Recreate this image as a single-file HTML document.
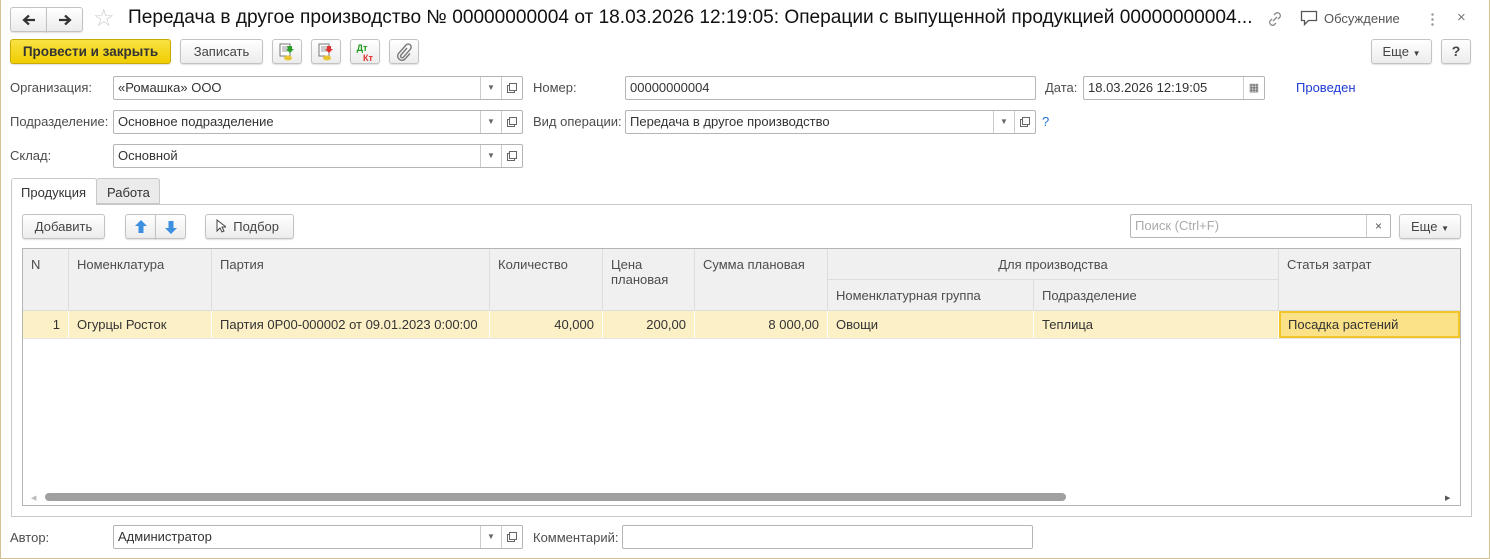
<!DOCTYPE html>
<html><head><meta charset="utf-8"><style>
*{box-sizing:border-box;margin:0;padding:0}
body{width:1490px;height:559px;background:#fff;font-family:"Liberation Sans",Arial,sans-serif;font-size:13px;color:#333;position:relative;overflow:hidden}
.frame{position:absolute;left:0;top:0;width:1490px;height:559px;border:1px solid #d3c28e;border-top:none}
.a{position:absolute}
.btn{position:absolute;height:25px;border:1px solid #c3c3c3;border-radius:3px;background:linear-gradient(#fff,#ececec);box-shadow:0 1px 1px rgba(0,0,0,.12);text-align:center;line-height:23px;color:#444}
.lbl{position:absolute;color:#4d4d4d}
.fld{position:absolute;height:24px;border:1px solid #b5b5b5;border-radius:2px;background:#fff;line-height:22px;padding-left:4px;color:#333}
.dd{position:absolute;top:0;width:21px;height:22px;border-left:1px solid #ccc;text-align:center;font-size:8px;color:#666;line-height:22px}
.op{position:absolute;top:0;right:0;width:21px;height:22px;border-left:1px solid #ccc}
.op:after{content:"";position:absolute;left:7px;top:6px;width:6px;height:6px;border:1px solid #666;box-shadow:-2px 2px 0 -1px #fff,-2px 2px 0 0 #666}
.th{position:absolute;background:#f0f0f0;border-right:1px solid #ddd;border-bottom:1px solid #ddd;padding:8px 8px;color:#4d4d4d;line-height:15px}
.td{position:absolute;top:311px;height:27px;background:#fcf0c6;border-right:1px solid #fff;padding:0 8px;line-height:28px;color:#333}
</style></head><body>
<div class="frame"></div>
<!-- nav -->
<div class="btn" style="left:10px;top:7px;width:37px;height:25px;border-radius:3px 0 0 3px"><svg width="14" height="12" viewBox="0 0 14 12" style="margin-top:6px"><path d="M13 6H3M7 1.5L2 6l5 4.5" fill="none" stroke="#333" stroke-width="2.2"/></svg></div>
<div class="btn" style="left:46px;top:7px;width:37px;height:25px;border-radius:0 3px 3px 0"><svg width="14" height="12" viewBox="0 0 14 12" style="margin-top:6px"><path d="M1 6h10M7 1.5L12 6l-5 4.5" fill="none" stroke="#333" stroke-width="2.2"/></svg></div>
<div class="a" style="left:93px;top:4px;font-size:24px;color:#ccc">&#9734;</div>
<div class="a" style="left:128px;top:7px;font-size:19.1px;color:#111;white-space:nowrap">Передача в другое производство № 00000000004 от 18.03.2026 12:19:05: Операции с выпущенной продукцией 00000000004...</div>
<svg class="a" style="left:1266px;top:10px" width="18" height="18" viewBox="0 0 18 18"><g fill="none" stroke="#888" stroke-width="1.3"><path d="M8 5l2-2a3 3 0 014 4l-2 2"/><path d="M10 13l-2 2a3 3 0 01-4-4l2-2"/><path d="M7 11l4-4"/></g></svg>
<svg class="a" style="left:1300px;top:10px" width="18" height="17" viewBox="0 0 18 17"><path d="M1.5 1.5h15v9h-8l-4 4v-4h-3z" fill="none" stroke="#555" stroke-width="1.3"/></svg>
<div class="a" style="left:1324px;top:11px;color:#555">Обсуждение</div>
<div class="a" style="left:1431px;top:12px;width:3px;height:14px;background:radial-gradient(circle,#999 1px,transparent 1.5px) 0 0/3px 5px"></div>
<div class="a" style="left:1457px;top:9px;color:#777;font-size:15px">×</div>
<!-- toolbar -->
<div class="btn" style="left:10px;top:39px;width:161px;background:linear-gradient(#f9e243,#f0cd00);border-color:#c9aa00;color:#333;font-weight:bold;font-size:13.5px">Провести и закрыть</div>
<div class="btn" style="left:180px;top:39px;width:83px">Записать</div>
<div class="btn" style="left:272px;top:39px;width:30px"><svg width="18" height="20" style="margin-top:2px" viewBox="0 0 18 20"><rect x="2" y="2" width="10" height="12" fill="#fff" stroke="#777"/><path d="M4 5h6M4 7h6M4 9h6" stroke="#999"/><ellipse cx="10" cy="16" rx="4" ry="2.5" fill="#e8c530"/><path d="M9 4h5v3h2l-4 4-4-4h2z" fill="#2aa02a"/></svg></div>
<div class="btn" style="left:311px;top:39px;width:30px"><svg width="18" height="20" style="margin-top:2px" viewBox="0 0 18 20"><rect x="2" y="2" width="10" height="12" fill="#fff" stroke="#777"/><path d="M4 5h6M4 7h6M4 9h6" stroke="#999"/><ellipse cx="10" cy="16" rx="4" ry="2.5" fill="#e8c530"/><path d="M10 4h4v3h2l-4 4-4-4h2z" fill="#e03030"/></svg></div>
<div class="btn" style="left:350px;top:39px;width:30px;line-height:9px;font-size:9px;font-weight:bold"><div style="color:#1a9a1a;margin:4px 0 0 -6px">Дт</div><div style="color:#e03030;margin:1px 0 0 6px">Кт</div></div>
<div class="btn" style="left:389px;top:39px;width:30px"><svg width="16" height="18" viewBox="0 0 16 18" style="margin-top:3px"><path d="M11 5l-6 7a1.6 1.6 0 002.3 2.3l7-8a3 3 0 00-4.3-4.3l-7.5 8.5a4.3 4.3 0 006 6l5.5-6" fill="none" stroke="#777" stroke-width="1.4"/></svg></div>
<div class="btn" style="left:1371px;top:39px;width:61px">Еще <span style="font-size:8px">&#9660;</span></div>
<div class="btn" style="left:1441px;top:39px;width:30px;font-weight:bold;font-size:14px">?</div>
<!-- fields -->
<div class="lbl" style="left:10px;top:80px">Организация:</div>
<div class="fld" style="left:113px;top:76px;width:410px">«Ромашка» ООО<div class="dd" style="left:366px">&#9660;</div><div class="op"></div></div>
<div class="lbl" style="left:533px;top:80px">Номер:</div>
<div class="fld" style="left:625px;top:76px;width:411px">00000000004</div>
<div class="lbl" style="left:1045px;top:80px">Дата:</div>
<div class="fld" style="left:1083px;top:76px;width:182px">18.03.2026 12:19:05<div class="dd" style="left:159px;font-size:11px">&#9638;</div></div>
<div class="a" style="left:1296px;top:80px;color:#1d3bd6">Проведен</div>
<div class="lbl" style="left:10px;top:114px">Подразделение:</div>
<div class="fld" style="left:113px;top:110px;width:410px">Основное подразделение<div class="dd" style="left:366px">&#9660;</div><div class="op"></div></div>
<div class="lbl" style="left:533px;top:114px">Вид операции:</div>
<div class="fld" style="left:625px;top:110px;width:411px">Передача в другое производство<div class="dd" style="left:367px">&#9660;</div><div class="op"></div></div>
<div class="a" style="left:1042px;top:114px;color:#1d6fd6">?</div>
<div class="lbl" style="left:10px;top:148px">Склад:</div>
<div class="fld" style="left:113px;top:144px;width:410px">Основной<div class="dd" style="left:366px">&#9660;</div><div class="op"></div></div>
<!-- tabs -->
<div class="a" style="left:11px;top:204px;width:1461px;height:313px;border:1px solid #c8c8c8"></div>
<div class="a" style="left:11px;top:178px;width:86px;height:27px;border:1px solid #c8c8c8;border-bottom:none;background:#fff;border-radius:3px 3px 0 0;padding:6px 0 0 9px;color:#333">Продукция</div>
<div class="a" style="left:96px;top:178px;width:64px;height:26px;border:1px solid #c8c8c8;background:#ebebeb;border-radius:3px 3px 0 0;padding:6px 0 0 10px;color:#333">Работа</div>
<!-- table toolbar -->
<div class="btn" style="left:22px;top:214px;width:83px">Добавить</div>
<div class="btn" style="left:125px;top:214px;width:31px;border-radius:3px 0 0 3px"><svg width="12" height="14" style="margin-top:5px" viewBox="0 0 12 14"><path d="M6 0l6 6H8.5v7h-5V6H0z" fill="#3d8fe0"/></svg></div>
<div class="btn" style="left:155px;top:214px;width:31px;border-radius:0 3px 3px 0"><svg width="12" height="14" style="margin-top:5px" viewBox="0 0 12 14"><path d="M6 14l6-6H8.5V1h-5v7H0z" fill="#3d8fe0"/></svg></div>
<div class="btn" style="left:205px;top:214px;width:89px;text-align:left;padding-left:10px"><svg width="10" height="14" viewBox="0 0 10 14" style="vertical-align:-2px"><path d="M1 1v11l3-3 2 4 2-1-2-4h4z" fill="#fff" stroke="#444"/></svg>&nbsp; Подбор</div>
<div class="fld" style="left:1130px;top:214px;width:261px;color:#aaa">Поиск (Ctrl+F)<div class="dd" style="left:235px;width:24px;font-size:12px;color:#555">×</div></div>
<div class="btn" style="left:1399px;top:214px;width:62px">Еще <span style="font-size:8px">&#9660;</span></div>
<!-- grid -->
<div class="a" style="left:22px;top:248px;width:1439px;height:258px;border:1px solid #b5b5b5"></div>
<div class="th" style="left:23px;top:249px;width:46px;height:62px">N</div>
<div class="th" style="left:69px;top:249px;width:143px;height:62px">Номенклатура</div>
<div class="th" style="left:212px;top:249px;width:278px;height:62px">Партия</div>
<div class="th" style="left:490px;top:249px;width:113px;height:62px">Количество</div>
<div class="th" style="left:603px;top:249px;width:92px;height:62px">Цена плановая</div>
<div class="th" style="left:695px;top:249px;width:133px;height:62px">Сумма плановая</div>
<div class="th" style="left:828px;top:249px;width:451px;height:31px;text-align:center">Для производства</div>
<div class="th" style="left:828px;top:280px;width:206px;height:31px">Номенклатурная группа</div>
<div class="th" style="left:1034px;top:280px;width:245px;height:31px">Подразделение</div>
<div class="th" style="left:1279px;top:249px;width:181px;height:62px;border-right:none">Статья затрат</div>
<div class="td" style="left:23px;width:46px;text-align:right">1</div>
<div class="td" style="left:69px;width:143px">Огурцы Росток</div>
<div class="td" style="left:212px;width:278px">Партия 0Р00-000002 от 09.01.2023 0:00:00</div>
<div class="td" style="left:490px;width:113px;text-align:right">40,000</div>
<div class="td" style="left:603px;width:92px;text-align:right">200,00</div>
<div class="td" style="left:695px;width:133px;text-align:right">8 000,00</div>
<div class="td" style="left:828px;width:206px">Овощи</div>
<div class="td" style="left:1034px;width:245px">Теплица</div>
<div class="td" style="left:1279px;width:181px;background:#fbe188;border:2px solid #f2c52a;line-height:24px;padding-left:7px">Посадка растений</div>
<div class="a" style="left:23px;top:338px;width:1437px;height:1px;background:#e6e6e6"></div>
<div class="a" style="left:31px;top:494px;font-size:7px;color:#bbb">&#9664;</div>
<div class="a" style="left:45px;top:493px;width:1021px;height:8px;border-radius:4px;background:#a0a0a0"></div>
<div class="a" style="left:1445px;top:494px;font-size:7px;color:#555">&#9654;</div>
<!-- bottom -->
<div class="lbl" style="left:10px;top:530px">Автор:</div>
<div class="fld" style="left:113px;top:525px;width:410px">Администратор<div class="dd" style="left:366px">&#9660;</div><div class="op"></div></div>
<div class="lbl" style="left:533px;top:530px">Комментарий:</div>
<div class="fld" style="left:622px;top:525px;width:411px"></div>
</body></html>
